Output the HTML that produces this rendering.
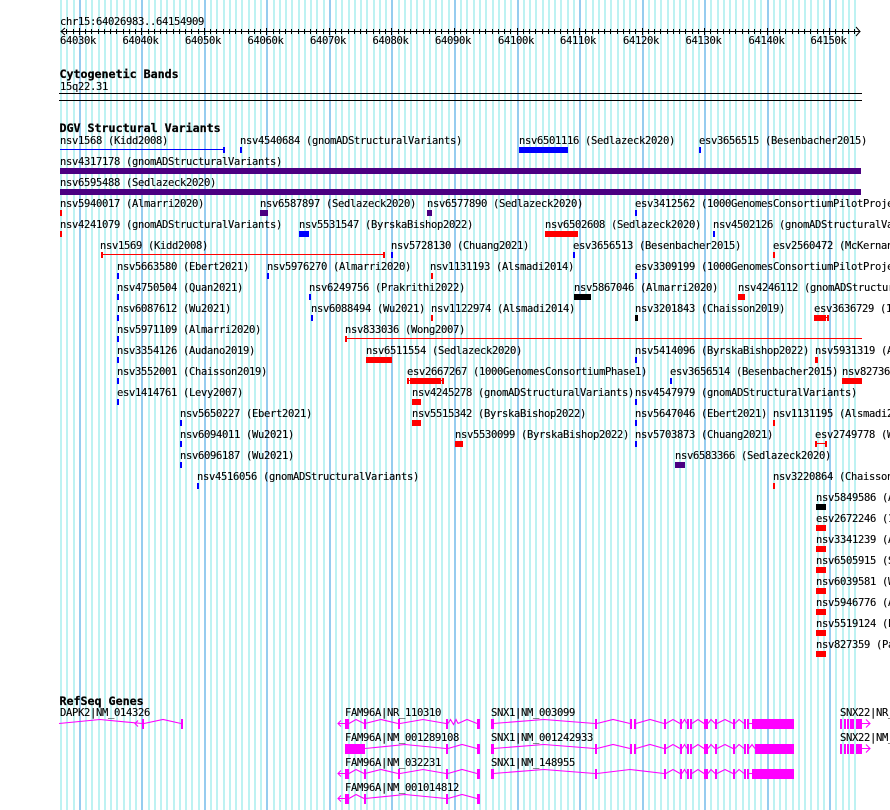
<!DOCTYPE html>
<html><head><meta charset="utf-8"><style>
html,body{margin:0;padding:0;background:#fff;width:890px;height:810px;overflow:hidden}
svg{display:block}
text{font-family:"DejaVu Sans Mono","Liberation Mono",monospace;font-size:10.5px;letter-spacing:-.32px;fill:#000;stroke:#000;stroke-width:.12px;white-space:pre}
text.b{font-weight:bold;font-size:11.65px;letter-spacing:0;stroke-width:.25px}
.c{shape-rendering:crispEdges}
.g{fill:none;stroke:#f0f;stroke-width:1.1}
</style></head><body>
<svg xmlns="http://www.w3.org/2000/svg" width="890" height="810" viewBox="0 0 890 810">
<path class="c" fill="none" stroke="#bdf2f2" stroke-width="2" transform="translate(1 0)" d="M60 0V810M66 0V810M73 0V810M85 0V810M91 0V810M98 0V810M104 0V810M110 0V810M116 0V810M123 0V810M129 0V810M135 0V810M148 0V810M154 0V810M160 0V810M166 0V810M173 0V810M179 0V810M185 0V810M191 0V810M198 0V810M210 0V810M216 0V810M223 0V810M229 0V810M235 0V810M241 0V810M248 0V810M254 0V810M260 0V810M273 0V810M279 0V810M285 0V810M291 0V810M298 0V810M304 0V810M310 0V810M316 0V810M323 0V810M335 0V810M341 0V810M348 0V810M354 0V810M360 0V810M366 0V810M373 0V810M379 0V810M385 0V810M398 0V810M404 0V810M410 0V810M416 0V810M423 0V810M429 0V810M435 0V810M441 0V810M448 0V810M460 0V810M466 0V810M473 0V810M479 0V810M485 0V810M492 0V810M498 0V810M504 0V810M510 0V810M523 0V810M529 0V810M535 0V810M542 0V810M548 0V810M554 0V810M560 0V810M567 0V810M573 0V810M585 0V810M592 0V810M598 0V810M604 0V810M610 0V810M617 0V810M623 0V810M629 0V810M635 0V810M648 0V810M654 0V810M660 0V810M667 0V810M673 0V810M679 0V810M685 0V810M692 0V810M698 0V810M710 0V810M717 0V810M723 0V810M729 0V810M735 0V810M742 0V810M748 0V810M754 0V810M760 0V810M773 0V810M779 0V810M785 0V810M792 0V810M798 0V810M804 0V810M810 0V810M817 0V810M823 0V810M835 0V810M842 0V810M848 0V810M854 0V810"/>
<path class="c" fill="none" stroke="#96ccef" stroke-width="2" transform="translate(1 0)" d="M79 0V810M141 0V810M204 0V810M266 0V810M329 0V810M391 0V810M454 0V810M517 0V810M579 0V810M642 0V810M704 0V810M767 0V810M829 0V810"/>

<!-- ruler -->
<path class="c" fill="none" stroke="#000" transform="translate(.5 0)" d="M60 31.5H860M66 29V34M73 29V34M79 28V35M85 29V34M91 29V34M98 29V34M104 29V34M110 29V34M116 29V34M123 29V34M129 29V34M135 29V34M141 28V35M148 29V34M154 29V34M160 29V34M166 29V34M173 29V34M179 29V34M185 29V34M191 29V34M198 29V34M204 28V35M210 29V34M216 29V34M223 29V34M229 29V34M235 29V34M241 29V34M248 29V34M254 29V34M260 29V34M266 28V35M273 29V34M279 29V34M285 29V34M291 29V34M298 29V34M304 29V34M310 29V34M316 29V34M323 29V34M329 28V35M335 29V34M341 29V34M348 29V34M354 29V34M360 29V34M366 29V34M373 29V34M379 29V34M385 29V34M391 28V35M398 29V34M404 29V34M410 29V34M416 29V34M423 29V34M429 29V34M435 29V34M441 29V34M448 29V34M454 28V35M460 29V34M466 29V34M473 29V34M479 29V34M485 29V34M492 29V34M498 29V34M504 29V34M510 29V34M517 28V35M523 29V34M529 29V34M535 29V34M542 29V34M548 29V34M554 29V34M560 29V34M567 29V34M573 29V34M579 28V35M585 29V34M592 29V34M598 29V34M604 29V34M610 29V34M617 29V34M623 29V34M629 29V34M635 29V34M642 28V35M648 29V34M654 29V34M660 29V34M667 29V34M673 29V34M679 29V34M685 29V34M692 29V34M698 29V34M704 28V35M710 29V34M717 29V34M723 29V34M729 29V34M735 29V34M742 29V34M748 29V34M754 29V34M760 29V34M767 28V35M773 29V34M779 29V34M785 29V34M792 29V34M798 29V34M804 29V34M810 29V34M817 29V34M823 29V34M829 28V35M835 29V34M842 29V34M848 29V34M854 29V34"/>
<path fill="none" stroke="#000" d="M65 28L61 31.5L65 35M856 27L860 31.5L856 36"/>
<text x="60" y="25">chr15:64026983..64154909</text>
<text x="60" y="44">64030k</text><text x="122.500" y="44">64040k</text><text x="185" y="44">64050k</text><text x="247.500" y="44">64060k</text><text x="310" y="44">64070k</text><text x="372.500" y="44">64080k</text><text x="435" y="44">64090k</text><text x="498" y="44">64100k</text><text x="560" y="44">64110k</text><text x="623" y="44">64120k</text><text x="685.500" y="44">64130k</text><text x="748.500" y="44">64140k</text><text x="810.500" y="44">64150k</text>

<text class="b" x="59.500" y="78">Cytogenetic Bands</text>
<text x="60" y="90">15q22.31</text>
<rect class="c" x="59" y="93" width="803" height="1" fill="#000"/>
<rect class="c" x="59" y="100" width="803" height="1" fill="#000"/>
<text class="b" x="59.500" y="132">DGV Structural Variants</text>

<!-- features -->
<path class="c" fill="#00f" d="M60 149h163v1h-163zM223 147h2v6h-2zM240 147h2v6h-2zM519 147h49v6h-49zM699 147h2v6h-2zM635 210h2v6h-2zM299 231h10v6h-10zM713 231h2v6h-2zM391 252h2v6h-2zM573 252h2v6h-2zM117 273h2v6h-2zM267 273h2v6h-2zM635 273h2v6h-2zM117 294h2v6h-2zM309 294h2v6h-2zM117 315h2v6h-2zM311 315h2v6h-2zM117 336h2v6h-2zM117 357h2v6h-2zM635 357h2v6h-2zM117 378h2v6h-2zM670 378h2v6h-2zM117 399h2v6h-2zM635 399h2v6h-2zM180 420h2v6h-2zM635 420h2v6h-2zM180 441h2v6h-2zM635 441h2v6h-2zM180 462h2v6h-2zM197 483h2v6h-2z"/>
<path class="c" fill="#f00" d="M60 210h2v6h-2zM60 231h2v6h-2zM545 231h33v6h-33zM101 252h2v6h-2zM101 254h283v1h-283zM383 252h2v6h-2zM773 252h2v6h-2zM431 273h2v6h-2zM738 294h7v6h-7zM431 315h2v6h-2zM814 315h12v6h-12zM826 317h2v1h-2zM827 315h2v6h-2zM345 336h2v6h-2zM345 338h517v1h-517zM366 357h26v6h-26zM815 357h3v6h-3zM407 378h2v6h-2zM407 380h37v1h-37zM410 378h31v6h-31zM442 378h2v6h-2zM842 378h20v6h-20zM412 399h9v6h-9zM412 420h9v6h-9zM773 420h2v6h-2zM455 441h8v6h-8zM815 441h2v6h-2zM815 443h12v1h-12zM825 441h2v6h-2zM773 483h2v6h-2zM816 525h10v6h-10zM816 546h10v6h-10zM816 567h10v6h-10zM816 588h10v6h-10zM816 609h10v6h-10zM816 630h10v6h-10zM816 651h10v6h-10z"/>
<path class="c" fill="#000" d="M574 294h17v6h-17zM635 315h3v6h-3zM816 504h10v6h-10z"/>
<path class="c" fill="#4b0082" d="M60 168h801v6h-801zM60 189h801v6h-801zM260 210h8v6h-8zM427 210h5v6h-5zM675 462h10v6h-10z"/>

<!-- labels -->
<text x="60" y="144">nsv1568 (Kidd2008)</text><text x="240" y="144">nsv4540684 (gnomADStructuralVariants)</text><text x="519" y="144">nsv6501116 (Sedlazeck2020)</text><text x="699" y="144">esv3656515 (Besenbacher2015)</text>
<text x="60" y="165">nsv4317178 (gnomADStructuralVariants)</text>
<text x="60" y="186">nsv6595488 (Sedlazeck2020)</text>
<text x="60" y="207">nsv5940017 (Almarri2020)</text><text x="260" y="207">nsv6587897 (Sedlazeck2020)</text><text x="427" y="207">nsv6577890 (Sedlazeck2020)</text><text x="635" y="207">esv3412562 (1000GenomesConsortiumPilotProject)</text>
<text x="60" y="228">nsv4241079 (gnomADStructuralVariants)</text><text x="299" y="228">nsv5531547 (ByrskaBishop2022)</text><text x="545" y="228">nsv6502608 (Sedlazeck2020)</text><text x="713" y="228">nsv4502126 (gnomADStructuralVariants)</text>
<text x="100" y="249">nsv1569 (Kidd2008)</text><text x="391" y="249">nsv5728130 (Chuang2021)</text><text x="573" y="249">esv3656513 (Besenbacher2015)</text><text x="773" y="249">esv2560472 (McKernan2009)</text>
<text x="117" y="270">nsv5663580 (Ebert2021)</text><text x="267" y="270">nsv5976270 (Almarri2020)</text><text x="430" y="270">nsv1131193 (Alsmadi2014)</text><text x="635" y="270">esv3309199 (1000GenomesConsortiumPilotProject)</text>
<text x="117" y="291">nsv4750504 (Quan2021)</text><text x="309" y="291">nsv6249756 (Prakrithi2022)</text><text x="574" y="291">nsv5867046 (Almarri2020)</text><text x="738" y="291">nsv4246112 (gnomADStructuralVariants)</text>
<text x="117" y="312">nsv6087612 (Wu2021)</text><text x="311" y="312">nsv6088494 (Wu2021)</text><text x="431" y="312">nsv1122974 (Alsmadi2014)</text><text x="635" y="312">nsv3201843 (Chaisson2019)</text><text x="814" y="312">esv3636729 (1000Genomes)</text>
<text x="117" y="333">nsv5971109 (Almarri2020)</text><text x="345" y="333">nsv833036 (Wong2007)</text>
<text x="117" y="354">nsv3354126 (Audano2019)</text><text x="366" y="354">nsv6511554 (Sedlazeck2020)</text><text x="635" y="354">nsv5414096 (ByrskaBishop2022)</text><text x="815" y="354">nsv5931319 (Almarri2020)</text>
<text x="117" y="375">nsv3552001 (Chaisson2019)</text><text x="407" y="375">esv2667267 (1000GenomesConsortiumPhase1)</text><text x="670" y="375">esv3656514 (Besenbacher2015)</text><text x="842" y="375">nsv82736</text>
<text x="117" y="396">esv1414761 (Levy2007)</text><text x="412" y="396">nsv4245278 (gnomADStructuralVariants)</text><text x="635" y="396">nsv4547979 (gnomADStructuralVariants)</text>
<text x="180" y="417">nsv5650227 (Ebert2021)</text><text x="412" y="417">nsv5515342 (ByrskaBishop2022)</text><text x="635" y="417">nsv5647046 (Ebert2021)</text><text x="773" y="417">nsv1131195 (Alsmadi2014)</text>
<text x="180" y="438">nsv6094011 (Wu2021)</text><text x="455" y="438">nsv5530099 (ByrskaBishop2022)</text><text x="635" y="438">nsv5703873 (Chuang2021)</text><text x="815" y="438">esv2749778 (Wong2007)</text>
<text x="180" y="459">nsv6096187 (Wu2021)</text><text x="675" y="459">nsv6583366 (Sedlazeck2020)</text>
<text x="197" y="480">nsv4516056 (gnomADStructuralVariants)</text><text x="773" y="480">nsv3220864 (Chaisson2019)</text>
<text x="816" y="501">nsv5849586 (Almarri2020)</text>
<text x="816" y="522">esv2672246 (1000Genomes)</text>
<text x="816" y="543">nsv3341239 (Audano2019)</text>
<text x="816" y="564">nsv6505915 (Sedlazeck2020)</text>
<text x="816" y="585">nsv6039581 (Wu2021)</text>
<text x="816" y="606">nsv5946776 (Almarri2020)</text>
<text x="816" y="627">nsv5519124 (Ebert2021)</text>
<text x="816" y="648">nsv827359 (Park2010)</text>

<!-- genes -->
<text class="b" x="59.500" y="705">RefSeq Genes</text>
<text x="60" y="716">DAPK2|NM_014326</text>
<text x="345" y="716">FAM96A|NR_110310</text>
<text x="345" y="741">FAM96A|NM_001289108</text>
<text x="345" y="766">FAM96A|NM_032231</text>
<text x="345" y="791">FAM96A|NM_001014812</text>
<text x="491" y="716">SNX1|NM_003099</text>
<text x="491" y="741">SNX1|NM_001242933</text>
<text x="491" y="766">SNX1|NM_148955</text>
<text x="840" y="716">SNX22|NR_</text>
<text x="840" y="741">SNX22|NM_</text>

<g class="g">
<path d="M59 723.500L100 719.500L142 723.500M144 723.500L163 719.500L181 723.500M138 720.500L135 723.500L138 726.500"/>
<!-- FAM96A -->
<path d="M338 723.500H345M341 720.500L338 723.500L341 726.500M349 723.500L356 719.500L364 723.500M365 723.500L381 719.500L398 723.500M400 723.500L423 719.500L446 723.500M448 723.500L450.500 719.500L453.500 724.500L456 719.500L458 723.500M458 723.500L467 719.500L477 723.500"/>
<path d="M365 748.500L405 744.500L446 748.500M448 748.500L462 744.500L477 748.500"/>
<path d="M338 773.500H345M341 770.500L338 773.500L341 776.500M349 773.500L356 769.500L364 773.500M365 773.500L381 769.500L398 773.500M400 773.500L423 769.500L446 773.500M448 773.500L462 769.500L477 773.500"/>
<path d="M338 798.500H345M341 795.500L338 798.500L341 801.500M349 798.500L356 794.500L364 798.500M365 798.500L405 794.500L446 798.500M448 798.500L462 794.500L477 798.500"/>
<!-- SNX1 -->
<path d="M493 723.500L544 719.500L595 723.500M597 723.500L613 719.500L630 723.500M636 723.500L650 719.500L664 723.500M666 723.500L673 719.500L680 723.500M682 723.500L684.500 719.500L687 723.500M692 723.500L698 719.500L704 723.500M708 723.500L711 719.500L715 723.500M717 723.500L725 719.500L733 723.500M735 723.500L739 719.500L744 723.500M749 723.500H752"/>
<path d="M493 748.500L544 744.500L595 748.500M597 748.500L613 744.500L630 748.500M636 748.500L650 744.500L664 748.500M666 748.500L673 744.500L680 748.500M682 748.500L684.500 744.500L687 748.500M692 748.500L698 744.500L704 748.500M708 748.500L711 744.500L715 748.500M717 748.500L725 744.500L733 748.500M735 748.500L739 744.500L744 748.500M749 748.500L752 744.500L755 748.500"/>
<path d="M493 773.500L544 769.500L595 773.500M597 773.500L630 769.500L664 773.500M666 773.500L673 769.500L680 773.500M682 773.500L684.500 769.500L687 773.500M692 773.500L698 769.500L704 773.500M708 773.500L711 769.500L715 773.500M717 773.500L725 769.500L733 773.500M735 773.500L739 769.500L744 773.500M749 773.500H752"/>
<!-- SNX22 -->
<path d="M862 723.500H870M866 719.500L870 723.500L866 727.500"/>
<path d="M862 748.500H870M866 744.500L870 748.500L866 752.500"/>
</g>
<path class="c" fill="#f0f" d="M142 719h2v10h-2zM181 719h2v10h-2z
M345 719h4v10h-4zM364 719h2v10h-2zM398 719h2v10h-2zM446 719h2v10h-2zM477 719h3v10h-3z
M345 744h20v10h-20zM446 744h2v10h-2zM477 744h3v10h-3z
M345 769h4v10h-4zM364 769h2v10h-2zM398 769h2v10h-2zM446 769h2v10h-2zM477 769h3v10h-3z
M345 794h4v10h-4zM364 794h2v10h-2zM446 794h2v10h-2zM477 794h3v10h-3z
M491 719h3v10h-3zM595 719h2v10h-2zM630 719h2v10h-2zM634 719h2v10h-2zM664 719h2v10h-2zM680 719h2v10h-2zM687 719h2v10h-2zM690 719h2v10h-2zM704 719h4v10h-4zM715 719h2v10h-2zM733 719h2v10h-2zM744 719h2v10h-2zM747 719h2v10h-2zM752 719h42v10h-42z
M491 744h3v10h-3zM595 744h2v10h-2zM630 744h2v10h-2zM634 744h2v10h-2zM664 744h2v10h-2zM680 744h2v10h-2zM687 744h2v10h-2zM690 744h2v10h-2zM704 744h4v10h-4zM715 744h2v10h-2zM733 744h2v10h-2zM744 744h2v10h-2zM747 744h2v10h-2zM755 744h39v10h-39z
M491 769h3v10h-3zM595 769h2v10h-2zM664 769h2v10h-2zM680 769h2v10h-2zM687 769h2v10h-2zM690 769h2v10h-2zM704 769h4v10h-4zM715 769h2v10h-2zM733 769h2v10h-2zM744 769h2v10h-2zM747 769h2v10h-2zM752 769h42v10h-42z
M840 719h2v10h-2zM844 719h2v10h-2zM847 719h2v10h-2zM850 719h4v10h-4zM856 719h6v10h-6z
M840 744h2v10h-2zM844 744h2v10h-2zM847 744h2v10h-2zM850 744h4v10h-4zM856 744h6v10h-6z"/>
</svg>
</body></html>
